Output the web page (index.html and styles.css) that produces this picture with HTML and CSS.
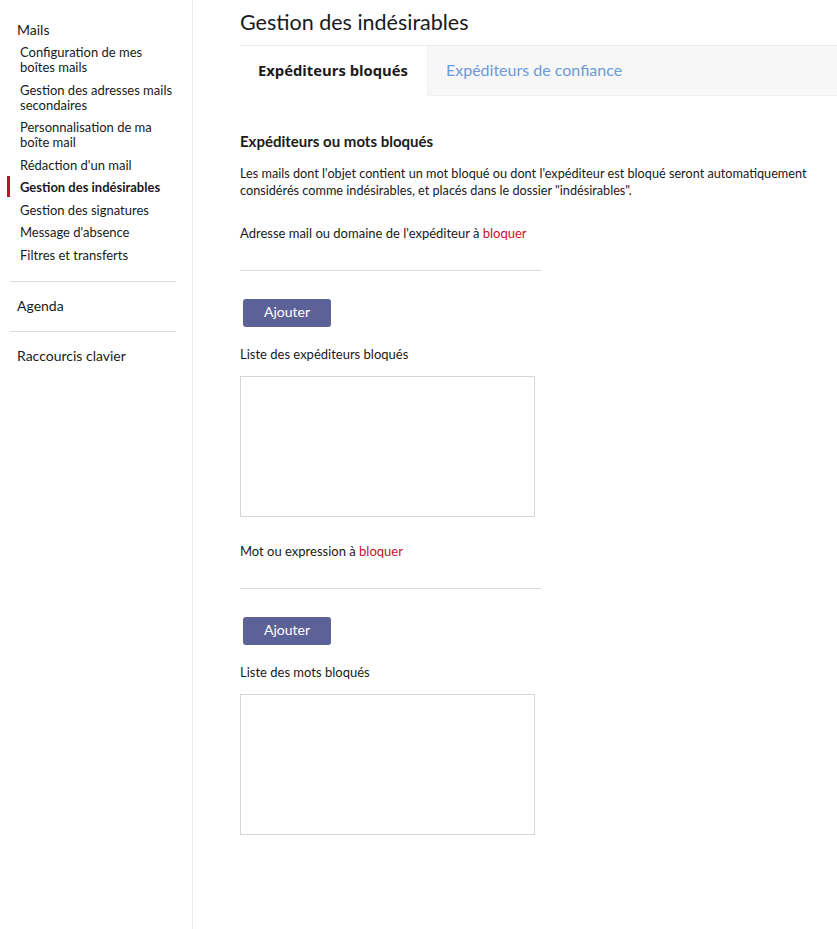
FILE: index.html
```html
<!DOCTYPE html>
<html lang="fr">
<head>
  <meta charset="UTF-8" />
  <title>Gestion des indésirables</title>
  <link rel="stylesheet" href="styles.css">
</head>
<body>

  <div class="settings">

    <!-- Sidebar -->
    <nav class="side-nav">
      <div class="nav-group">
        <div class="nav-title">Mails</div>
        <ul class="nav-list">
          <li>Configuration de mes boîtes mails</li>
          <li>Gestion des adresses mails secondaires</li>
          <li>Personnalisation de ma boîte mail</li>
          <li>Rédaction d'un mail</li>
          <li class="active">Gestion des indésirables</li>
          <li>Gestion des signatures</li>
          <li>Message d'absence</li>
          <li>Filtres et transferts</li>
        </ul>
      </div>
      <div class="nav-group">
        <div class="nav-title">Agenda</div>
      </div>
      <div class="nav-group">
        <div class="nav-title">Raccourcis clavier</div>
      </div>
    </nav>

    <!-- Main content -->
    <main class="content">
      <h1 class="page-title">Gestion des indésirables</h1>

      <div class="tabs">
        <div class="tab tab-active">Expéditeurs bloqués</div>
        <div class="tab">Expéditeurs de confiance</div>
      </div>

      <section class="block-section">
        <h2>Expéditeurs ou mots bloqués</h2>
        <p class="intro">Les mails dont l'objet contient un mot bloqué ou dont l'expéditeur est bloqué seront automatiquement considérés comme indésirables, et placés dans le dossier "indésirables".</p>

        <label class="field-label">Adresse mail ou domaine de l'expéditeur à <span class="hl">bloquer</span></label>
        <input class="line-input" type="text" />
        <button class="add-btn">Ajouter</button>

        <div class="list-label">Liste des expéditeurs bloqués</div>
        <div class="list-box"></div>

        <label class="field-label">Mot ou expression à <span class="hl">bloquer</span></label>
        <input class="line-input" type="text" />
        <button class="add-btn">Ajouter</button>

        <div class="list-label">Liste des mots bloqués</div>
        <div class="list-box"></div>
      </section>
    </main>
  </div>

</body>
</html>
```

FILE: styles.css
```css
/* Page */
body {
  margin: 0;
  font-family: 'Lato', 'Liberation Sans', sans-serif;
  font-size: 13px;
  color: #1a1a1a;
  background: #fff;
}

.settings {
  display: flex;
  min-height: 929px;
}

/* Sidebar */
.side-nav {
  width: 193px;
  flex-shrink: 0;
  border-right: 1px solid #ececec;
  padding-top: 21px;
  box-sizing: border-box;
}

.nav-group {
  margin: 0 16px 0 10px;
  padding-bottom: 11px;
}

.nav-group + .nav-group {
  border-top: 1px solid #dcdcdc;
  padding-top: 15px;
  padding-bottom: 16px;
}

.nav-title {
  font-size: 14px;
  padding-left: 7px;
  line-height: 18px;
}

.nav-list {
  list-style: none;
  margin: 6px 0 0;
  padding: 0;
}

.nav-list li {
  position: relative;
  padding-left: 10px;
  line-height: 15px;
  margin-bottom: 7.5px;
}

.nav-list li.active {
  font-weight: 700;
}

.nav-list li.active::before {
  content: '';
  position: absolute;
  left: -3px;
  top: -4px;
  width: 3px;
  height: 21px;
  background: #c5102b;
}

/* Main */
.content {
  flex: 1;
  padding-left: 47px;
}

.page-title {
  font-size: 21.5px;
  font-weight: 400;
  margin: 9px 0 10px;
  line-height: 26px;
}

/* Tabs */
.tabs {
  display: flex;
  border-top: 1px solid #ececec;
  height: 50px;
}

.tab {
  padding: 0 18px;
  display: flex;
  align-items: center;
  font-size: 16px;
  padding-bottom: 2px;
}

.tab-active {
  font-family: 'Open Sans', 'Lato', sans-serif;
  font-size: 14.8px;
  font-weight: 700;
  width: 151px;
}

.tab + .tab {
  flex: 1;
  background: #f7f7f7;
  color: #6d9ad8;
  border-left: 1px solid #f0f0f0;
  border-bottom: 1px solid #f0f0f0;
}

/* Section */
.block-section {
  padding-top: 35px;
}

.block-section h2 {
  font-size: 15px;
  font-weight: 700;
  margin: 0 0 14px;
  line-height: 20px;
}

.intro {
  margin: 0 0 26px;
  width: 590px;
  font-size: 12.7px;
  line-height: 17px;
}

.field-label {
  display: block;
  line-height: 17px;
}

.hl {
  color: #c5102b;
}

.line-input {
  display: block;
  width: 301px;
  height: 21px;
  margin-top: 8px;
  border: none;
  border-bottom: 1px solid #dcdcdc;
  outline: none;
  padding: 0;
  box-sizing: border-box;
}

.add-btn {
  display: block;
  margin: 28px 0 0 3px;
  width: 88px;
  height: 28px;
  padding: 0 0 3px;
  border: none;
  border-radius: 3px;
  background: #5c6198;
  color: #fff;
  font-family: inherit;
  font-size: 14px;
  cursor: pointer;
}

.list-label {
  margin-top: 19px;
  line-height: 17px;
}

.list-box {
  width: 293px;
  height: 139px;
  border: 1px solid #d6d6d6;
  margin: 13px 0 26px;
}
```
